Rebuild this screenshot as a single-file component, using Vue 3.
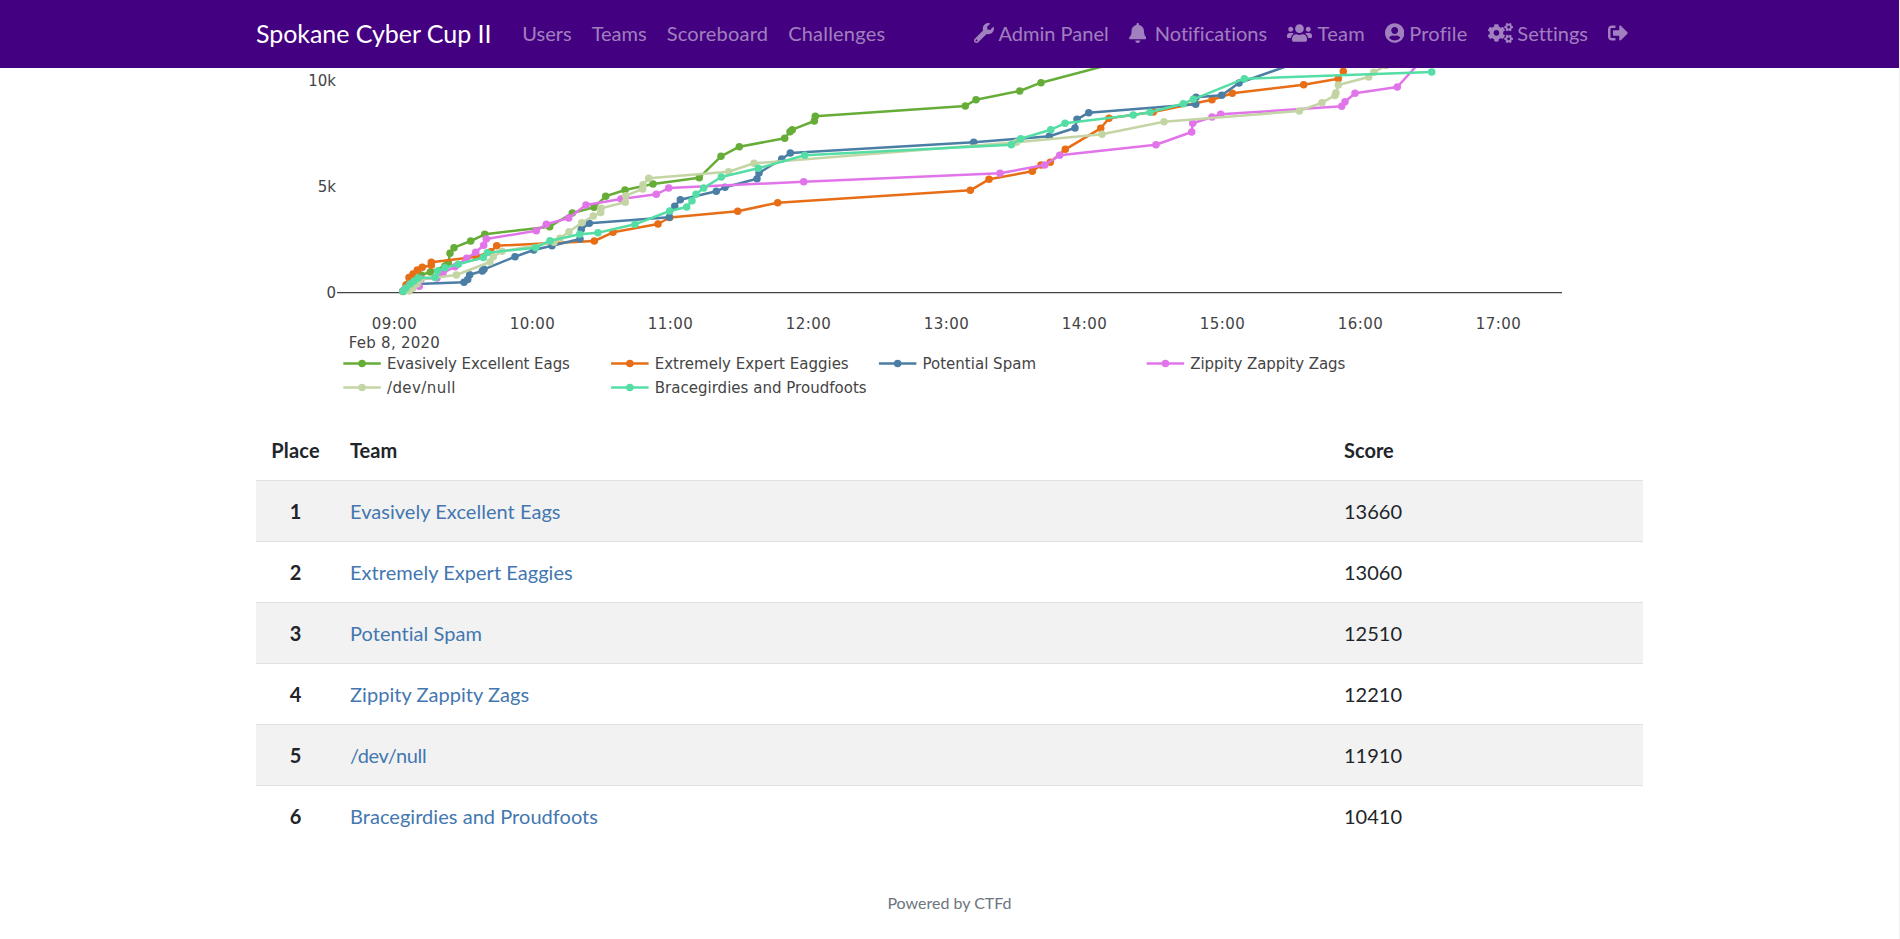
<script setup>
const mainLinks = ['Users', 'Teams', 'Scoreboard', 'Challenges']

const userLinks = [
  {
    label: 'Admin Panel', w: 512, h: 512,
    d: 'M507.73 109.1c-2.24-9.03-13.54-12.09-20.12-5.51l-74.36 74.36-67.88-11.31-11.31-67.88 74.36-74.36c6.62-6.62 3.43-17.9-5.66-20.16-47.38-11.74-99.55.91-136.58 37.93-39.64 39.64-50.55 97.1-34.05 147.2L18.74 402.76c-24.99 24.99-24.99 65.51 0 90.5 24.99 24.99 65.51 24.99 90.5 0l213.21-213.21c50.12 16.71 107.47 5.68 147.37-34.22 37.07-37.07 49.7-89.32 37.91-136.73zM64 472c-13.25 0-24-10.75-24-24 0-13.26 10.75-24 24-24s24 10.74 24 24c0 13.25-10.75 24-24 24z',
  },
  {
    label: 'Notifications', w: 448, h: 512, kind: 'wide',
    d: 'M224 512c35.32 0 63.97-28.65 63.97-64H160.03c0 35.35 28.65 64 63.97 64zm215.39-149.71c-19.32-20.76-55.47-51.99-55.47-154.29 0-77.7-54.48-139.9-127.94-155.16V32c0-17.67-14.32-32-31.98-32s-31.98 14.33-31.98 32v20.84C118.56 68.1 64.08 130.3 64.08 208c0 102.3-36.15 133.53-55.47 154.29-6 6.45-8.66 14.16-8.61 21.71.11 16.4 12.98 32 32.1 32h383.8c19.12 0 32-15.6 32.1-32 .05-7.55-2.61-15.27-8.61-21.71z',
  },
  {
    label: 'Team', w: 640, h: 512, kind: 'team-link',
    d: 'M96 224c35.3 0 64-28.7 64-64s-28.7-64-64-64-64 28.7-64 64 28.7 64 64 64zm448 0c35.3 0 64-28.7 64-64s-28.7-64-64-64-64 28.7-64 64 28.7 64 64 64zm32 32h-64c-17.6 0-33.5 7.1-45.1 18.6 40.3 22.1 68.9 62 75.1 109.4h66c17.7 0 32-14.3 32-32v-32c0-35.3-28.7-64-64-64zm-256 0c61.9 0 112-50.1 112-112S381.9 32 320 32 208 82.1 208 144s50.1 112 112 112zm76.8 32h-8.3c-20.8 10-43.9 16-68.5 16s-47.6-6-68.5-16h-8.3C179.6 288 128 339.6 128 403.2V432c0 26.5 21.5 48 48 48h288c26.5 0 48-21.5 48-48v-28.8c0-63.6-51.6-115.2-115.2-115.2zm-223.7-13.4C161.5 263.1 145.6 256 128 256H64c-35.3 0-64 28.7-64 64v32c0 17.7 14.3 32 32 32h65.9c6.3-47.4 34.9-87.3 75.2-109.4z',
  },
  {
    label: 'Profile', w: 496, h: 512, kind: 'profile-link',
    d: 'M248 8C111 8 0 119 0 256s111 248 248 248 248-111 248-248S385 8 248 8zm0 96c48.6 0 88 39.4 88 88s-39.4 88-88 88-88-39.4-88-88 39.4-88 88-88zm0 344c-58.7 0-111.3-26.6-146.5-68.2 18.8-35.4 55.6-59.8 98.5-59.8 2.4 0 4.8.4 7.1 1.1 13 4.2 26.6 6.9 40.9 6.9 14.3 0 28-2.7 40.9-6.9 2.3-.7 4.7-1.1 7.1-1.1 42.9 0 79.7 24.4 98.5 59.8C359.3 421.4 306.7 448 248 448z',
  },
  {
    label: 'Settings', w: 640, h: 512,
    d: 'M512.1 191l-8.2 14.3c-3 5.3-9.4 7.5-15.1 5.4-11.8-4.4-22.6-10.7-32.1-18.6-4.6-3.8-5.8-10.5-2.8-15.7l8.2-14.3c-6.9-8-12.3-17.3-15.9-27.4h-16.5c-6 0-11.2-4.3-12.2-10.3-2-12-2.1-24.6 0-37.1 1-6 6.2-10.4 12.2-10.4h16.5c3.6-10.1 9-19.4 15.9-27.4l-8.2-14.3c-3-5.2-1.9-11.9 2.8-15.7 9.5-7.9 20.4-14.2 32.1-18.6 5.7-2.1 12.1.1 15.1 5.4l8.2 14.3c10.5-1.9 21.2-1.9 31.7 0L552 6.3c3-5.3 9.4-7.5 15.1-5.4 11.8 4.4 22.6 10.7 32.1 18.6 4.6 3.8 5.8 10.5 2.8 15.7l-8.2 14.3c6.9 8 12.3 17.3 15.9 27.4h16.5c6 0 11.2 4.3 12.2 10.3 2 12 2.1 24.6 0 37.1-1 6-6.2 10.4-12.2 10.4h-16.5c-3.6 10.1-9 19.4-15.9 27.4l8.2 14.3c3 5.2 1.9 11.9-2.8 15.7-9.5 7.9-20.4 14.2-32.1 18.6-5.7 2.1-12.1-.1-15.1-5.4l-8.2-14.3c-10.4 1.9-21.2 1.9-31.7 0zm-10.5-58.8c38.5 29.6 82.4-14.3 52.8-52.8-38.5-29.7-82.4 14.3-52.8 52.8zM386.3 286.1l33.7 16.8c10.1 5.8 14.5 18.1 10.5 29.1-8.9 24.2-26.4 46.4-42.6 65.8-7.4 8.9-20.2 11.1-30.3 5.3l-29.1-16.8c-16 13.7-34.6 24.6-54.9 31.7v33.6c0 11.6-8.3 21.6-19.7 23.6-24.6 4.2-50.4 4.4-75.9 0-11.5-2-20-11.9-20-23.6V418c-20.3-7.2-38.9-18-54.9-31.7L74 403c-10 5.8-22.9 3.6-30.3-5.3-16.2-19.4-33.3-41.6-42.2-65.7-4-10.9.4-23.2 10.5-29.1l33.3-16.8c-3.9-20.9-3.9-42.4 0-63.4L12 205.8c-10.1-5.8-14.6-18.1-10.5-29 8.9-24.2 26-46.4 42.2-65.8 7.4-8.9 20.2-11.1 30.3-5.3l29.1 16.8c16-13.7 34.6-24.6 54.9-31.7V57.1c0-11.5 8.2-21.5 19.6-23.5 24.6-4.2 50.5-4.4 76-.1 11.5 2 20 11.9 20 23.6v33.6c20.3 7.2 38.9 18 54.9 31.7l29.1-16.8c10-5.8 22.9-3.6 30.3 5.3 16.2 19.4 33.2 41.6 42.1 65.8 4 10.9.1 23.2-10 29.1l-33.7 16.8c3.9 21 3.9 42.5 0 63.5zm-117.6 21.1c59.2-77-28.7-164.9-105.7-105.7-59.2 77 28.7 164.9 105.7 105.7zm243.4 182.7l-8.2 14.3c-3 5.3-9.4 7.5-15.1 5.4-11.8-4.4-22.6-10.7-32.1-18.6-4.6-3.8-5.8-10.5-2.8-15.7l8.2-14.3c-6.9-8-12.3-17.3-15.9-27.4h-16.5c-6 0-11.2-4.3-12.2-10.3-2-12-2.1-24.6 0-37.1 1-6 6.2-10.4 12.2-10.4h16.5c3.6-10.1 9-19.4 15.9-27.4l-8.2-14.3c-3-5.2-1.9-11.9 2.8-15.7 9.5-7.9 20.4-14.2 32.1-18.6 5.7-2.1 12.1.1 15.1 5.4l8.2 14.3c10.5-1.9 21.2-1.9 31.7 0l8.2-14.3c3-5.3 9.4-7.5 15.1-5.4 11.8 4.4 22.6 10.7 32.1 18.6 4.6 3.8 5.8 10.5 2.8 15.7l-8.2 14.3c6.9 8 12.3 17.3 15.9 27.4h16.5c6 0 11.2 4.3 12.2 10.3 2 12 2.1 24.6 0 37.1-1 6-6.2 10.4-12.2 10.4h-16.5c-3.6 10.1-9 19.4-15.9 27.4l8.2 14.3c3 5.2 1.9 11.9-2.8 15.7-9.5 7.9-20.4 14.2-32.1 18.6-5.7 2.1-12.1-.1-15.1-5.4l-8.2-14.3c-10.4 1.9-21.2 1.9-31.7 0zM501.6 431c38.5 29.6 82.4-14.3 52.8-52.8-38.5-29.6-82.4 14.3-52.8 52.8z',
  },
  {
    label: '', w: 512, h: 512,
    d: 'M497 273L329 441c-15 15-41 4.5-41-17v-96H152c-13.3 0-24-10.7-24-24v-96c0-13.3 10.7-24 24-24h136V88c0-21.4 25.9-32 41-17l168 168c9.3 9.4 9.3 24.6 0 34zM192 436v-40c0-6.6-5.4-12-12-12H96c-17.7 0-32-14.3-32-32V160c0-17.7 14.3-32 32-32h84c6.6 0 12-5.4 12-12V76c0-6.6-5.4-12-12-12H96c-53 0-96 43-96 96v192c0 53 43 96 96 96h84c6.6 0 12-5.4 12-12z',
  },
]

const standings = [
  ['Evasively Excellent Eags', 13660],
  ['Extremely Expert Eaggies', 13060],
  ['Potential Spam', 12510],
  ['Zippity Zappity Zags', 12210],
  ['/dev/null', 11910],
  ['Bracegirdies and Proudfoots', 10410],
]

// Each series is a list of "x,y" points in the chart's own units.
const series = [
  { color: '#66ad38', width: 183, pts: '403,291.5 408,284 414,279 421,275 430.3,272 445,266 448.3,263 450,253.3 454,247.7 470.7,241 484.7,234.3 549.7,226.7 572.3,213 594,207.3 605.7,196.3 625,190 653,184 699.3,177.7 721,156.3 739.3,146.7 784.7,138.3 790,131.7 792.3,129.7 814.3,121 815.3,116.3 965.3,106 976,99.7 1019.7,91 1041,82.7 1112,64' },
  { color: '#e76e16', width: 194, pts: '403,291 406,285 409,277.5 413,274 417.3,270 422.3,267.3 431.3,265.3 431.3,262.3 476.5,256.7 490.7,251.7 496.7,245.7 594.3,241 613,232.3 658,224 669.7,217.5 737.7,211.3 777.7,202.7 970.3,190.3 989,179.3 1032.3,171.3 1041,165 1050.3,162.3 1065.3,149.3 1100.7,128.3 1109,118.3 1153.3,112 1212,99.7 1232.3,93.3 1303.7,84.7 1338.3,78.7 1343.3,71.3 1346,63' },
  { color: '#4b7ea4', width: 113.5, pts: '403,291 411,287 417,284 464,282.3 467.7,279.5 469.7,274.7 482.3,271 484,269.3 515,256.7 533.7,250 552,245.7 580,239 581.3,229.3 589.3,223.3 669.3,217.3 674.7,206.3 680.3,199.7 716.3,191.3 725,187.3 757,178.7 759,173 781.7,159 790.3,153 973.7,142.3 1049.3,136.3 1075,128 1077,119.3 1088.7,112.7 1195.7,104.3 1196,97.3 1221.7,95.3 1239,83 1296,63' },
  { color: '#e274ea', width: 155, pts: '403,291 410,288 419.3,286.3 421,279 437,278 443,273 455,266.7 466.7,258.3 475.7,252.3 483.7,245.3 486.3,239 536.3,230.7 546.3,224.3 568.7,218 586,205 621,199 656.3,194.3 668.7,188 803.7,181.7 1000,173.3 1044.7,165 1059.7,155.3 1156,144.7 1191.7,132 1192.7,123.3 1212,117 1220.7,114.3 1341.7,106.3 1345,101.7 1355,93.3 1397.3,87 1420,62' },
  { color: '#c4d5a5', width: 68.5, pts: '409,291 413,288 417,284 420,279.5 456.3,275 490,262 493.3,256.7 502,251.3 554,242.3 560,238.3 569,231.7 581.7,222.7 593.3,216 600.7,212.5 601,208.3 625.3,202.3 625.7,195.7 642.7,189 643,184.7 648.7,178.3 728.7,171.7 754,163.3 1016.7,142.3 1102,134.3 1164,121.7 1299.3,111 1322,102.7 1335,95.5 1336,92.7 1338.3,85 1368.7,77 1373.7,72.3 1386,65.5' },
  { color: '#54dda4', width: 212, pts: '403,291.3 406,288 410,284 414,281 418,278 435,277.5 437.7,271 445,267.7 458.3,264.3 483.3,257.5 487.3,252.7 535.7,247.7 550,240.7 579.7,234.3 598,232.7 635,224.3 669.7,211 686.7,207 692,200.7 696,194.3 703.7,188 721.3,177 758.3,168.3 804.7,155.3 1011.3,144.7 1020.7,138.7 1050.7,129.7 1065,123.3 1133.3,115 1150,112.3 1183.3,103.7 1193.3,99.3 1244.3,78.7 1431.7,72' },
].map((s, i) => ({
  ...s,
  name: standings[i][0],
  dots: s.pts.split(' ').map((p) => p.split(',').map(Number)),
  lx: 343.3 + (i % 4) * 267.8,
  ly: i < 4 ? 363.6 : 387.4,
}))

const hours = ['09:00', '10:00', '11:00', '12:00', '13:00', '14:00', '15:00', '16:00', '17:00']
const yTicks = [
  ['10k', 86],
  ['5k', 192],
  ['0', 298],
]
</script>

<template>
  <div class="page">
    <nav class="navbar">
      <div class="container bar">
        <a class="brand">Spokane Cyber Cup II</a>
        <ul class="links left">
          <li v-for="l in mainLinks" :key="l"><a class="link">{{ l }}</a></li>
        </ul>
        <ul class="links right">
          <li v-for="l in userLinks" :key="l.label">
            <a class="link" :class="l.kind">
              <svg class="icon" :viewBox="`0 0 ${l.w} ${l.h}`" :width="(l.w / 512) * 20" height="20"><path :d="l.d" /></svg>
              <span v-if="l.label">{{ l.label }}</span>
            </a>
          </li>
        </ul>
      </div>
    </nav>

    <main class="container">
      <svg class="chart" viewBox="256 68 1387 352" width="1387" height="352">
        <line class="axis" x1="337" y1="292.5" x2="1562" y2="292.5" />
        <g v-for="s in series" :key="s.name">
          <polyline :points="s.pts" :stroke="s.color" class="line" />
          <circle v-for="(d, i) in s.dots" :key="i" :cx="d[0]" :cy="d[1]" r="3.75" :fill="s.color" />
        </g>
        <text v-for="t in yTicks" :key="t[0]" x="336" :y="t[1]" text-anchor="end">{{ t[0] }}</text>
        <text v-for="(h, i) in hours" :key="h" :x="394.2 + i * 138" y="328.8" text-anchor="middle" textLength="45">{{ h }}</text>
        <text x="394.3" y="348" text-anchor="middle" textLength="91">Feb 8, 2020</text>
        <g v-for="s in series" :key="'k' + s.name">
          <line class="line" :x1="s.lx" :x2="s.lx + 37.5" :y1="s.ly" :y2="s.ly" :stroke="s.color" />
          <circle :cx="s.lx + 18.75" :cy="s.ly" r="3.75" :fill="s.color" />
          <text :x="s.lx + 43.6" :y="s.ly + 5.2" :textLength="s.width">{{ s.name }}</text>
        </g>
      </svg>

      <table class="board">
        <thead>
          <tr><th class="place">Place</th><th class="team">Team</th><th>Score</th></tr>
        </thead>
        <tbody>
          <tr v-for="(r, i) in standings" :key="r[0]">
            <th class="place">{{ i + 1 }}</th>
            <td><a :class="{ tight: r[0].startsWith('/') }">{{ r[0] }}</a></td>
            <td>{{ r[1] }}</td>
          </tr>
        </tbody>
      </table>
    </main>

    <footer class="footer">Powered by CTFd</footer>
  </div>
</template>

<style>
body {
  margin: 0;
  background: #fff;
}
</style>

<style scoped>
.page {
  box-sizing: border-box;
  height: 939px;
  overflow: hidden;
  border-right: 1px solid #f1f1f1;
  font: 20px/30px Lato, "Liberation Sans", sans-serif;
  font-variant-ligatures: none;
  color: #212529;
}
.container {
  width: 1387px;
  margin-left: 256px;
}
.navbar {
  width: 1900px;
  height: 68px;
  background: #430080;
}
.bar {
  display: flex;
  align-items: center;
  height: 66px;
}
.brand {
  font-size: 25px;
  line-height: 37.5px;
  letter-spacing: -0.05px;
  padding-top: 1px;
  margin-right: 21px;
  color: #fff;
  white-space: nowrap;
}
.links {
  display: flex;
  margin: 0;
  padding: 0;
  list-style: none;
}
.left li:nth-child(n + 3) {
  letter-spacing: 0.2px;
}
.right {
  margin-left: auto;
  margin-right: 5px;
}
.link {
  display: flex;
  align-items: center;
  gap: 4.8px;
  height: 30px;
  padding: 0 10px;
  color: rgba(255, 255, 255, 0.5);
  white-space: nowrap;
}
.wide {
  gap: 8.6px;
}
.team-link {
  gap: 5.4px;
  letter-spacing: 0.3px;
}
.profile-link {
  letter-spacing: 0.2px;
}
.icon {
  display: block;
  fill: currentColor;
}
.chart {
  display: block;
}
.chart text {
  font: 15px "DejaVu Sans", sans-serif;
  fill: #444;
}
.line {
  fill: none;
  stroke-width: 2.5;
  stroke-linejoin: round;
}
.axis {
  stroke: #444;
  stroke-width: 1.25;
}
.board {
  width: 1387px;
  table-layout: fixed;
  border-collapse: collapse;
}
.board th,
.board td {
  padding: 15px;
  text-align: left;
}
.board thead th {
  height: 30px;
}
.board tbody th,
.board tbody td {
  border-top: 1px solid #dee2e6;
}
.board .place {
  width: 49px;
  padding: 15px;
  text-align: center;
}
.board thead .place {
  letter-spacing: 0.2px;
}
.board .team {
  width: 964px;
}
.board tbody tr:nth-child(odd) {
  background: #f2f2f2;
}
.board a {
  color: #4377b0;
  letter-spacing: 0.04px;
}
.board .tight {
  letter-spacing: -0.35px;
}
.footer {
  margin-top: 44.5px;
  text-align: center;
  font-size: 16px;
  line-height: 24px;
  color: #6c757d;
}
</style>
